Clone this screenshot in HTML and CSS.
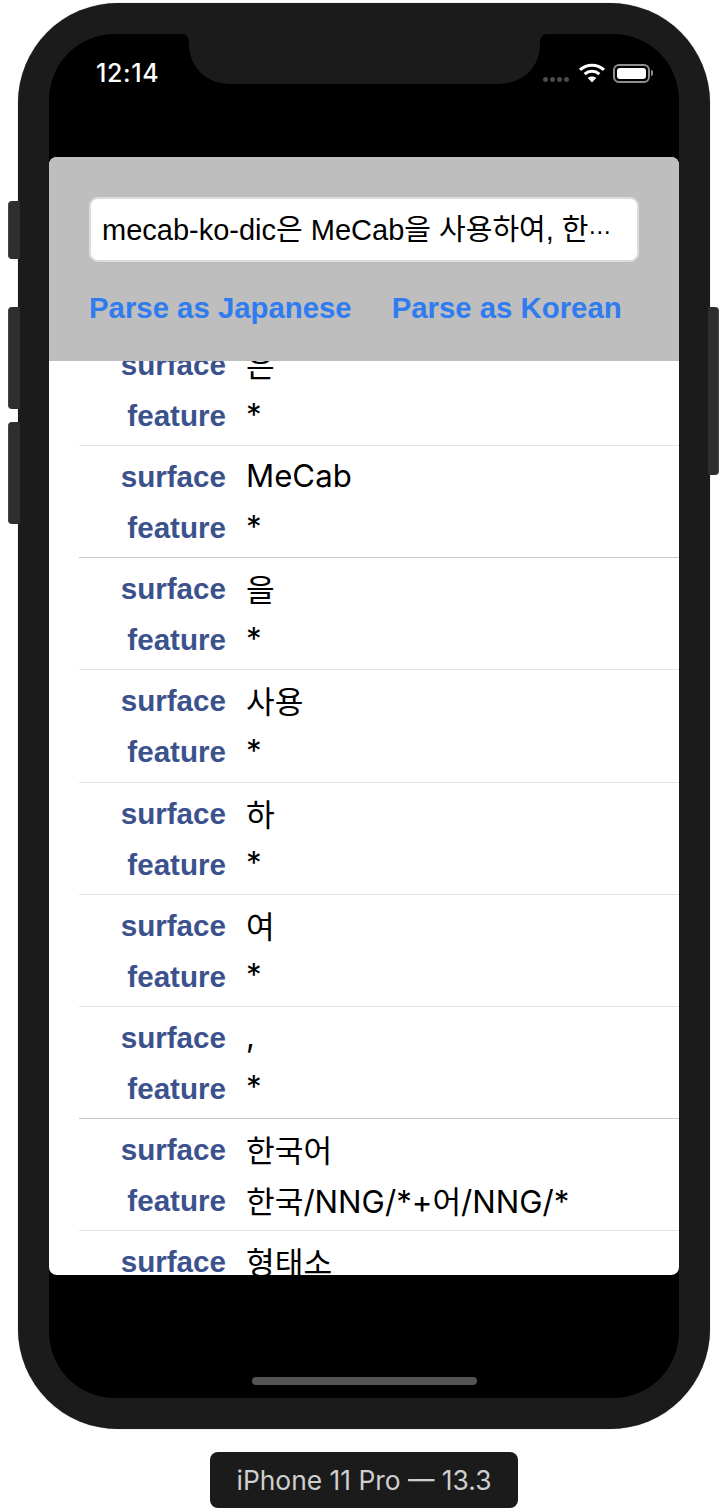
FILE: index.html
```html
<!DOCTYPE html>
<html lang="ko">
<head>
<meta charset="utf-8">
<title>iPhone 11 Pro — 13.3</title>
<link rel="stylesheet" href="styles.css">
</head>
<body>
<div class="stage">
  <div class="phone">
    <span class="side side-silent"></span>
    <span class="side side-up"></span>
    <span class="side side-down"></span>
    <span class="side side-power"></span>
    <div class="screen">
      <svg class="notch" viewBox="0 0 391 50" width="391" height="50" aria-hidden="true">
        <path d="M0 0H12C18 0 20 3 20 10C20 34 38 50 62 50H329C353 50 371 34 371 10C371 3 373 0 379 0H391V-1H0Z" fill="#1b1b1b"/>
      </svg>
      <div class="status">
        <span class="clock">12:14</span>
        <div class="status-icons">
          <span class="dots"><i></i><i></i><i></i><i></i></span>
          <svg class="wifi" viewBox="0 0 26 20" width="26" height="20" aria-hidden="true">
            <path d="M1 6.8C8 .6 18 .6 25 6.8" fill="none" stroke="#fff" stroke-width="3"/>
            <path d="M5.6 11.2C10 7.4 16 7.4 20.4 11.2" fill="none" stroke="#fff" stroke-width="3"/>
            <path d="M13 19.5L8.8 15C11 13 15 13 17.2 15Z" fill="#fff"/>
          </svg>
          <span class="battery"><span class="battery-fill"></span></span>
          <span class="battery-cap"></span>
        </div>
      </div>
      <div class="app">
        <header class="toolbar">
          <div class="field"><span class="field-text">mecab-ko-dic은 MeCab을 사용하여, 한<span class="more">⋯</span></span></div>
          <div class="actions">
            <span class="action">Parse as Japanese</span>
            <span class="action">Parse as Korean</span>
          </div>
        </header>
        <div class="list">
          <div class="rows">
            <div class="row"><div class="pair"><span class="key">surface</span><span class="val">은</span></div><div class="pair"><span class="key">feature</span><span class="val">*</span></div></div>
            <div class="row"><div class="pair"><span class="key">surface</span><span class="val">MeCab</span></div><div class="pair"><span class="key">feature</span><span class="val">*</span></div></div>
            <div class="row"><div class="pair"><span class="key">surface</span><span class="val">을</span></div><div class="pair"><span class="key">feature</span><span class="val">*</span></div></div>
            <div class="row"><div class="pair"><span class="key">surface</span><span class="val">사용</span></div><div class="pair"><span class="key">feature</span><span class="val">*</span></div></div>
            <div class="row"><div class="pair"><span class="key">surface</span><span class="val">하</span></div><div class="pair"><span class="key">feature</span><span class="val">*</span></div></div>
            <div class="row"><div class="pair"><span class="key">surface</span><span class="val">여</span></div><div class="pair"><span class="key">feature</span><span class="val">*</span></div></div>
            <div class="row"><div class="pair"><span class="key">surface</span><span class="val">,</span></div><div class="pair"><span class="key">feature</span><span class="val">*</span></div></div>
            <div class="row"><div class="pair"><span class="key">surface</span><span class="val">한국어</span></div><div class="pair"><span class="key">feature</span><span class="val">한국/NNG/*+어/NNG/*</span></div></div>
            <div class="row"><div class="pair"><span class="key">surface</span><span class="val">형태소</span></div><div class="pair"><span class="key">feature</span><span class="val">*</span></div></div>
          </div>
        </div>
      </div>
      <div class="home-bar"><span class="home"></span></div>
    </div>
  </div>
  <div class="label">iPhone 11 Pro — 13.3</div>
</div>
</body>
</html>
```
FILE: styles.css
```css
* { box-sizing: border-box; }
html, body { margin: 0; padding: 0; background: #fff; }
body { width: 728px; height: 1510px; overflow: hidden; font-family: "Liberation Sans", "Noto Sans CJK KR", sans-serif; }
.stage { display: flex; flex-direction: column; align-items: center; padding: 3px 18px 0 18px; }
.phone { position: relative; width: 692px; height: 1426px; background: #1b1b1b; border-radius: 100px; padding: 31px; align-self: stretch; box-shadow: 0 0 1px #777; }
.side { position: absolute; background: #2e2e2e; }
.side-silent { left: -10px; top: 198px; width: 12px; height: 58px; border-radius: 4px 0 0 4px; border-left: 1px solid #444; }
.side-up { left: -10px; top: 304px; width: 12px; height: 102px; border-radius: 4px 0 0 4px; border-left: 1px solid #444; }
.side-down { left: -10px; top: 419px; width: 12px; height: 102px; border-radius: 4px 0 0 4px; border-left: 1px solid #444; }
.side-power { right: -9px; top: 304px; width: 11px; height: 168px; border-radius: 0 4px 4px 0; border-right: 1px solid #444; }
.screen { position: relative; height: 1364px; background: #000; border-radius: 66px; display: flex; flex-direction: column; overflow: hidden; }
.notch { position: absolute; left: 120px; top: 0; overflow: visible; }
.status { height: 123px; flex: none; display: flex; justify-content: space-between; align-items: flex-start; padding: 26px 0 0 47px; }
.clock { color: #fff; font-size: 25px; line-height: 27px; font-weight: 500; letter-spacing: 0.6px; font-family: Inter, "Liberation Sans", sans-serif; }
.status-icons { position: relative; display: flex; align-items: center; padding: 3px 26px 0 0; }
.dots { display: flex; gap: 2px; margin-right: 10px; margin-top: 12px; }
.dots i { width: 5px; height: 5px; border-radius: 50%; background: #4a4a4a; }
.wifi { margin-right: 8px; }
.battery { width: 37px; height: 19px; border: 2px solid #8e8e8e; border-radius: 6px; padding: 2px; display: block; }
.battery-fill { display: block; height: 100%; background: #fff; border-radius: 3px; }
.battery-cap { width: 2px; height: 6px; margin-left: 1px; background: #8e8e8e; border-radius: 0 2px 2px 0; }
.app { width: 630px; height: 1118px; flex: none; border-radius: 8px; overflow: hidden; background: #fff; display: flex; flex-direction: column; }
.toolbar { height: 204px; flex: none; background: #bebebe; padding: 40px 40px 0 40px; position: relative; z-index: 1; }
.field { height: 65px; background: #fff; border: 2px solid #dcdcdc; border-radius: 9px; display: flex; align-items: center; padding: 0 11px 6px 11px; }
.field-text { font-size: 29px; color: #000; white-space: nowrap; }
.more { font-family: "DejaVu Sans", sans-serif; font-size: 23px; }
.actions { display: flex; gap: 40px; margin-top: 29px; }
.action { color: #2f7bf0; font-size: 29.35px; font-weight: 700; line-height: 34px; white-space: nowrap; }
.list { flex: 1; overflow: hidden; min-height: 0; }
.rows { margin-top: -27px; padding-left: 30px; }
.row { height: 112.14px; padding-top: 6px; border-bottom: 1px solid #e4e4e4; }
.row:nth-child(2), .row:nth-child(7) { border-bottom-color: #c8c8c8; }
.pair { display: flex; align-items: center; height: 50px; }
.pair + .pair { margin-top: 1px; }
.key { width: 147px; flex: none; text-align: right; color: #3b528c; font-size: 29.6px; font-weight: 700; }
.val { margin-left: 20px; padding-bottom: 3px; font-size: 31.2px; color: #000; white-space: nowrap; font-family: Inter, "Noto Sans CJK KR", sans-serif; }
.home-bar { flex: 1; display: flex; align-items: flex-end; justify-content: center; padding-bottom: 13px; }
.home { width: 225px; height: 8px; border-radius: 4px; background: #555; }
.label { margin-top: 23px; width: 308px; height: 56px; background: #1b1b1b; color: #cfcfcf; border-radius: 8px; display: flex; align-items: center; justify-content: center; font-size: 26.4px; font-family: Inter, "Liberation Sans", sans-serif; white-space: nowrap; }
```
